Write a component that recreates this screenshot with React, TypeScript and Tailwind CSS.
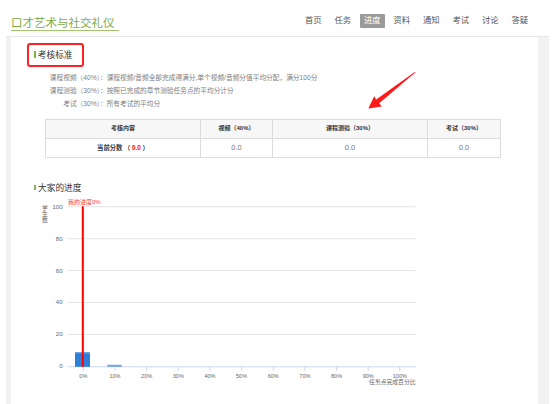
export default function App() {
  const nav = ['首页', '任务', '进度', '资料', '通知', '考试', '讨论', '答疑'];
  const xLabels = ['0%', '10%', '20%', '30%', '40%', '50%', '60%', '70%', '80%', '90%', '100%'];
  const yTicks = [
    { v: '100', y: 205.5 },
    { v: '80', y: 237.4 },
    { v: '60', y: 269.3 },
    { v: '40', y: 301.2 },
    { v: '20', y: 333.1 },
  ];
  const x0 = 67.5;
  const step = 31.65;
  const criteria = [
    { k: '课程视频（40%）：', v: '课程视频/音频全部完成得满分,单个视频/音频分值平均分配，满分100分' },
    { k: '课程测验（30%）：', v: '按照已完成的章节测验任务点的平均分计分' },
    { k: '考试（30%）：', v: '所有考试的平均分' },
  ];
  return (
    <div className="relative w-[553px] h-[404px] overflow-hidden bg-white font-['Liberation_Sans','Noto_Sans_CJK_SC',sans-serif]">
      <div className="flex h-[36px] items-start">
        <div className="ml-[11px] mt-[16.5px] text-[11.5px] leading-[13px] text-[#7daa45] border-b border-[#a3c46f] pr-[4px]">
          口才艺术与社交礼仪
        </div>
        <nav className="ml-auto mr-[21px] mt-[14.3px] flex gap-[4.9px] text-[8.3px] leading-[13.4px] text-[#555]">
          {nav.map((n) =>
            n === '进度' ? (
              <span key={n} className="px-[4px] bg-[#9a9a9a] text-white rounded-[1px]">
                {n}
              </span>
            ) : (
              <span key={n} className="px-[4px]">
                {n}
              </span>
            )
          )}
        </nav>
      </div>
      <div className="ml-[6px] w-[543px] h-[368px] bg-[#f2f2f2] border-t border-[#e6e6e6] pl-[5px] pr-[11px]">
        <div className="h-full bg-white flex flex-col">
          <div className="mt-[6.3px] ml-[15.7px] w-[57px] h-[23.4px] border-2 border-[#f22] rounded-[3px] flex items-center pl-[5.6px]">
            <span className="w-[1.5px] h-[7px] bg-[#7cb342]" />
            <span className="ml-[2px] text-[8.7px] leading-[10px] text-[#333]">考核标准</span>
          </div>
          <div className="mt-[4.5px] ml-[35px] flex flex-col text-[6.7px] leading-[13px] text-[#808080]">
            {criteria.map((c) => (
              <div key={c.k} className="flex">
                <span className="w-[60.7px] text-right whitespace-nowrap">{c.k}</span>
                <span className="whitespace-nowrap">{c.v}</span>
              </div>
            ))}
          </div>
          <table className="mt-[8.8px] ml-[34px] w-[455px] table-fixed border-collapse text-[6px] text-[#333]">
            <colgroup>
              <col className="w-[155px]" />
              <col className="w-[72px]" />
              <col className="w-[155px]" />
              <col className="w-[73px]" />
            </colgroup>
            <tbody>
              <tr className="h-[19px] bg-[#f7f7f7] font-bold">
                <td className="border border-[#dcdcdc] text-center">考核内容</td>
                <td className="border border-[#dcdcdc] text-center">视频（40%）</td>
                <td className="border border-[#dcdcdc] text-center">课程测验（30%）</td>
                <td className="border border-[#dcdcdc] text-center">考试（30%）</td>
              </tr>
              <tr className="h-[19px]">
                <td className="border border-[#dcdcdc] text-center font-bold text-[6.3px]">
                  当前分数 （<span className="text-[#f00]"> 0.0 </span>）
                </td>
                <td className="border border-[#dcdcdc] text-center text-[7.5px] text-[#777]">0.0</td>
                <td className="border border-[#dcdcdc] text-center text-[7.5px] text-[#777]">0.0</td>
                <td className="border border-[#dcdcdc] text-center text-[7.5px] text-[#777]">0.0</td>
              </tr>
            </tbody>
          </table>
          <div className="mt-[23.7px] ml-[23px] h-[12px] flex items-center">
            <span className="w-[1.5px] h-[5.5px] bg-[#8db255]" />
            <span className="ml-[2.5px] text-[8.7px] leading-[12px] text-[#333]">大家的进度</span>
          </div>
          <svg className="ml-[19px] block" width="392" height="195" viewBox="30 192.7 392 195">
            {yTicks.map((t) => (
              <g key={t.v}>
                <line x1={x0} x2={415.5} y1={t.y} y2={t.y} stroke="#e3e3e3" strokeWidth="1" />
                <text x="62.5" y={t.y + 2} fontSize="6" fill="#666" textAnchor="end">
                  {t.v}
                </text>
              </g>
            ))}
            <text x="62.5" y="367" fontSize="6" fill="#666" textAnchor="end">
              0
            </text>
            <text x="45" y="209" fontSize="5.8" fill="#666" textAnchor="middle">学</text>
            <text x="45" y="215" fontSize="5.8" fill="#666" textAnchor="middle">生</text>
            <text x="45" y="221" fontSize="5.8" fill="#666" textAnchor="middle">数</text>
            <line x1={x0} x2={415.5} y1="365.5" y2="365.5" stroke="#ccd6eb" strokeWidth="1" />
            {xLabels.map((l, i) => (
              <g key={l}>
                <line
                  x1={x0 + step / 2 + i * step}
                  x2={x0 + step / 2 + i * step}
                  y1="365.5"
                  y2="369.5"
                  stroke="#ccd6eb"
                  strokeWidth="1"
                />
                <text x={x0 + step / 2 + i * step} y="376.5" fontSize="5.5" fill="#666" textAnchor="middle">
                  {l}
                </text>
              </g>
            ))}
            <rect x="75" y="351" width="15" height="14.5" fill="#2f7fd9" />
            <rect x="75" y="351" width="15" height="1.2" fill="#6fa6e6" />
            <rect x="107.3" y="363.5" width="14.4" height="2" fill="#6ea3e2" />
            <rect x="81.8" y="205" width="2" height="160.5" fill="#ff0000" />
            <text x="68" y="202.3" fontSize="6" fill="#ff3b3b">我的进度0%</text>
            <text x="415.5" y="382.8" fontSize="5.8" fill="#666" textAnchor="end">
              任务点完成百分比
            </text>
          </svg>
        </div>
      </div>
      <svg
        className="absolute left-0 top-0 pointer-events-none"
        width="553"
        height="404"
        viewBox="0 0 553 404"
      >
        <polygon
          points="415.3,72.5 379.2,103.2 381.8,106.4 368.3,108.5 374.2,96.2 376.2,99.4 414.7,71.9"
          fill="#ff1a1a"
        />
      </svg>
    </div>
  );
}
